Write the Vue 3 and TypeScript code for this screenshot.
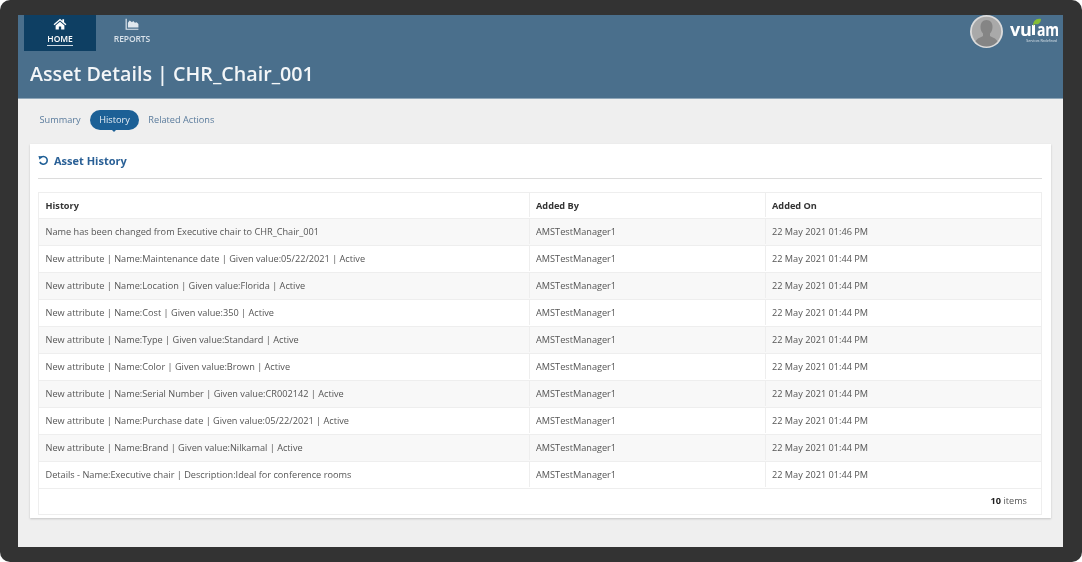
<script setup lang="ts">
const rows: string[] = [
  'Name has been changed from Executive chair to CHR_Chair_001',
  'New attribute | Name:Maintenance date | Given value:05/22/2021 | Active',
  'New attribute | Name:Location | Given value:Florida | Active',
  'New attribute | Name:Cost | Given value:350 | Active',
  'New attribute | Name:Type | Given value:Standard | Active',
  'New attribute | Name:Color | Given value:Brown | Active',
  'New attribute | Name:Serial Number | Given value:CR002142 | Active',
  'New attribute | Name:Purchase date | Given value:05/22/2021 | Active',
  'New attribute | Name:Brand | Given value:Nilkamal | Active',
  'Details - Name:Executive chair | Description:Ideal for conference rooms',
]
const dates = rows.map((_, i) => (i === 0 ? '22 May 2021 01:46 PM' : '22 May 2021 01:44 PM'))
</script>

<template>
  <div class="frame">
    <div class="screen">
      <header class="header">
        <div class="topbar">
          <nav class="nav">
            <a class="nav-item active">
              <svg class="nav-icon" viewBox="0 0 24 20" width="14" height="12">
                <path fill="#fff" d="M12 1 1 10.500l1.600 1.700L12 4.200l9.400 8 1.600-1.700-4-3.400V2h-3v2.600zM12 6 4.500 12.400V19.500h5.500v-5h4v5h5.500v-7.100z" />
              </svg>
              <span class="nav-label underlined">HOME</span>
            </a>
            <a class="nav-item">
              <svg class="nav-icon" viewBox="0 0 24 20" width="14" height="12">
                <path fill="#dfe7ee" d="M1 1h2v17h20v2H1zM5 16V8l3-4 4 3 2-2 3 3 3-1 3 3v6z" />
              </svg>
              <span class="nav-label">REPORTS</span>
            </a>
          </nav>
          <div class="brand">
            <div class="avatar">
              <svg viewBox="0 0 33 33" width="33" height="33">
                <circle cx="16.500" cy="16.500" r="16.500" fill="#dcdcdc" />
                <circle cx="16.500" cy="16.500" r="14.700" fill="#a9a9a9" />
                <path fill="#858585" d="M16.500 5c-4 0-6 3-6 7 0 3 1 5 2.500 6.500v2.500c-2 1.500-6 2-7.500 5.500a14.700 14.700 0 0 0 22 0c-1.500-3.500-5.500-4-7.500-5.500v-2.500C21.500 17 22.500 15 22.500 12c0-4-2-7-6-7z" />
              </svg>
            </div>
            <div class="logo">
              <div class="logo-word">
                <span>vu</span><span class="logo-i"><svg class="leaf" viewBox="0 0 10 8" width="10" height="8"><path fill="#86bd36" d="M1 8C1 3 4 0 9 1c0 4-3 6-6 5z" /></svg></span><span class="logo-am">am</span>
              </div>
              <div class="logo-sub">Services Redefined</div>
            </div>
          </div>
        </div>
        <h1 class="title">Asset Details | CHR_Chair_001</h1>
      </header>

      <main class="content">
        <div class="tabs">
          <a class="tab">Summary</a>
          <a class="tab current">History</a>
          <a class="tab">Related Actions</a>
        </div>

        <section class="card">
          <h2 class="card-title">
            <svg viewBox="0 0 12 12" width="11" height="11">
              <path fill="none" stroke="#1f5f96" stroke-width="1.700" d="M2.600 3.200A4.200 4.200 0 1 1 2 7.500" />
              <path fill="#1f5f96" d="M0.500 1.200 5 1.500 1.600 5.200z" />
            </svg>
            Asset History
          </h2>

          <div class="table">
            <div class="row head">
              <div class="cell c1">History</div>
              <div class="cell c2">Added By</div>
              <div class="cell c3">Added On</div>
            </div>
            <div v-for="(r, i) in rows" :key="i" class="row" :class="{ odd: i % 2 === 0 }">
              <div class="cell c1">{{ r }}</div>
              <div class="cell c2">AMSTestManager1</div>
              <div class="cell c3">{{ dates[i] }}</div>
            </div>
            <div class="pager"><b>10</b>&nbsp;items</div>
          </div>
        </section>
      </main>
    </div>
  </div>
</template>

<style>
html, body { margin: 0; background: #fff; }
</style>

<style scoped>
.frame {
  width: 1082px;
  height: 562px;
  box-sizing: border-box;
  padding: 15px 19px 15px 18px;
  background: #333333;
  border-radius: 10px;
  overflow: hidden;
  font-family: "Open Sans", "Noto Sans", sans-serif;
}
.screen {
  height: 532px;
  background: #efefef;
  display: flex;
  flex-direction: column;
  overflow: hidden;
  filter: blur(0.35px);
}
.header {
  height: 83px;
  background: #4a6f8c;
  border-bottom: 1px solid #8fa6b8;
  flex: none;
}
.topbar {
  display: flex;
  justify-content: space-between;
  align-items: flex-start;
  height: 36px;
}
.nav { display: flex; margin-left: 6px; }
.nav-item {
  width: 72px;
  height: 36px;
  display: flex;
  flex-direction: column;
  align-items: center;
  color: #d9e2ea;
  padding-top: 3px;
  box-sizing: border-box;
}
.nav-item.active { background: #0e3f63; color: #fff; }
.nav-icon { display: block; }
.nav-label { font-size: 8.500px; line-height: 12px; margin-top: 3px; letter-spacing: -0.100px; font-weight: 600; }
.underlined { border-bottom: 1px solid #cfdbe5; padding: 0 0 1px; line-height: 11px; }
.brand { display: flex; align-items: flex-start; margin-right: 6px; gap: 7px; }
.avatar { width: 33px; height: 33px; }
.avatar svg { display: block; }
.logo { color: #fff; width: 47px; margin-top: 6px; }
.logo-word {
  font-weight: 700;
  font-size: 18px;
  line-height: 17px;
  letter-spacing: -0.300px;
  display: flex;
  align-items: flex-end;
  height: 17px;
}
.logo-i {
  position: relative;
  display: inline-block;
  flex: none;
  width: 3px;
  height: 10px;
  background: #fff;
  margin: 0 2px 3px 1px;
}
.leaf { position: absolute; left: 0; top: -7px; }
.logo-am {
  display: inline-block;
  transform: scaleX(0.78);
  transform-origin: left center;
}
.logo-sub {
  font-size: 3.500px;
  line-height: 4px;
  margin-top: 1px;
  color: #d7e0e7;
  text-align: right;
  white-space: nowrap;
}
.title {
  margin: 9px 0 0 12px;
  font-size: 19.700px;
  line-height: 28px;
  font-weight: 600;
  color: #f3f6f8;
}
.content { flex: 1; padding: 0 12px; }
.tabs {
  display: flex;
  align-items: center;
  height: 24px;
  margin-top: 9px;
  font-size: 9.200px;
  color: #5a7b9c;
}
.tab { padding: 0 9px 0 9.500px; line-height: 20px; white-space: nowrap; }
.tab.current {
  background: #1c6096;
  color: #e6eef5;
  border-radius: 10px;
  position: relative;
}
.tab.current::after {
  content: "";
  position: absolute;
  left: 50%;
  bottom: -2px;
  margin-left: -2px;
  border: 2px solid transparent;
  border-bottom: 0;
  border-top-color: #1c6096;
}
.card {
  margin-top: 12px;
  height: 374px;
  box-sizing: border-box;
  background: #fff;
  padding: 0 9px 0 8px;
  box-shadow: 0 1px 2px rgba(0, 0, 0, 0.18);
}
.card-title {
  margin: 0;
  height: 35px;
  border-bottom: 1px solid #dcdcdc;
  box-sizing: border-box;
  display: flex;
  align-items: center;
  gap: 5px;
  padding-bottom: 1px;
  font-size: 11px;
  font-weight: 700;
  color: #2a6096;
}
.table {
  margin-top: 13px;
  border: 1px solid #eeeeee;
  box-sizing: border-box;
  height: 323px;
  font-size: 9.190px;
  color: #555;
}
.row {
  display: grid;
  grid-template-columns: 490px 236px 1fr;
  height: 27px;
  border-bottom: 1px solid #eeeeee;
  box-sizing: border-box;
  padding-bottom: 1px;
}
.row.odd { background: #f8f8f8; }
.row.head { height: 26px; font-weight: 700; color: #333; background: #fff; }
.cell {
  display: flex;
  align-items: center;
  padding-left: 6.500px;
  white-space: nowrap;
}
.c2, .c3 { border-left: 1px solid #eeeeee; padding-left: 6px; }
.pager {
  height: 25px;
  display: flex;
  justify-content: flex-end;
  align-items: center;
  padding: 0 14px 2px 0;
  box-sizing: border-box;
  color: #555;
}
.pager b { color: #222; }
</style>
